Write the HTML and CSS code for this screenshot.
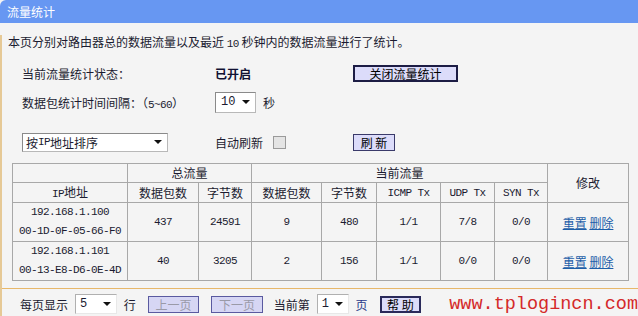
FILE: index.html
```html
<!DOCTYPE html>
<html lang="zh-CN">
<head>
<meta charset="utf-8">
<title>流量统计</title>
<link rel="stylesheet" href="styles.css">
</head>
<body>
<div class="header">流量统计</div>
<div class="content">
  <p class="intro">本页分别对路由器总的数据流量以及最近 <span class="asc">10</span> 秒钟内的数据流量进行了统计。</p>
  <div class="form">
    <div class="row r1">
      <span class="lbl">当前流量统计状态：</span>
      <span class="val strong">已开启</span>
      <span class="btn btn-main">关闭流量统计</span>
    </div>
    <div class="row r2">
      <span class="lbl">数据包统计时间间隔：（<span class="asc">5~60</span>）</span>
      <span class="val"><span class="sel sel-int"><span class="asc">10</span><i class="arrow"></i></span><span class="unit">秒</span></span>
      <span></span>
    </div>
    <div class="row r3">
      <span class="lbl"><span class="sel sel-sort">按<span class="asc">IP</span>地址排序<i class="arrow"></i></span></span>
      <span class="val">自动刷新<span class="chk"></span></span>
      <span class="btn btn-small">刷 新</span>
    </div>
  </div>
  <table class="stats">
    <colgroup>
      <col style="width:115px"><col style="width:71px"><col style="width:53px"><col style="width:70px"><col style="width:55px"><col style="width:64px"><col style="width:54px"><col style="width:53px"><col style="width:81px">
    </colgroup>
    <tr class="h1">
      <td></td>
      <td colspan="2">总流量</td>
      <td colspan="5">当前流量</td>
      <td rowspan="2">修改</td>
    </tr>
    <tr class="h2">
      <td><span class="asc">IP</span>地址</td>
      <td>数据包数</td>
      <td>字节数</td>
      <td>数据包数</td>
      <td>字节数</td>
      <td class="asc">ICMP Tx</td>
      <td class="asc">UDP Tx</td>
      <td class="asc">SYN Tx</td>
    </tr>
    <tr class="data">
      <td class="asc">192.168.1.100<br>00-1D-0F-05-66-F0</td>
      <td class="asc">437</td>
      <td class="asc">24591</td>
      <td class="asc">9</td>
      <td class="asc">480</td>
      <td class="asc">1/1</td>
      <td class="asc">7/8</td>
      <td class="asc">0/0</td>
      <td><a href="#">重置</a> <a href="#">删除</a></td>
    </tr>
    <tr class="data">
      <td class="asc">192.168.1.101<br>00-13-E8-D6-0E-4D</td>
      <td class="asc">40</td>
      <td class="asc">3205</td>
      <td class="asc">2</td>
      <td class="asc">156</td>
      <td class="asc">1/1</td>
      <td class="asc">0/0</td>
      <td class="asc">0/0</td>
      <td><a href="#">重置</a> <a href="#">删除</a></td>
    </tr>
  </table>
  <div class="sep"></div>
  <div class="footer">
    <span>每页显示</span>
    <span class="sel sel-page"><span class="asc">5</span><i class="arrow"></i></span>
    <span class="f-row">行</span>
    <span class="btn btn-dis b-prev">上一页</span>
    <span class="btn btn-dis b-next">下一页</span>
    <span class="f-cur">当前第</span>
    <span class="sel sel-cur"><span class="asc">1</span><i class="arrow"></i></span>
    <span class="f-page">页</span>
    <span class="btn btn-help">帮 助</span>
    <span class="wm">www.tplogincn.com</span>
  </div>
</div>
</body>
</html>
```

FILE: styles.css
```css
html, body {
  margin: 0;
  padding: 0;
  background: #f4f4f4;
}
body {
  width: 638px;
  height: 316px;
  overflow: hidden;
  font-family: "Noto Sans CJK SC", "Liberation Sans", sans-serif;
  font-size: 12px;
  color: #1b1b30;
}
.asc {
  font-family: "Liberation Mono", "DejaVu Sans Mono", monospace;
  font-size: 11px;
  letter-spacing: -0.6px;
}
.header {
  height: 23px;
  line-height: 23px;
  background: #6797f2;
  color: #ffffff;
  padding-left: 7px;
  border-top-left-radius: 6px;
  font-size: 12px;
}
.content {
  border-left: 2px solid #e6c996;
  height: 293px;
  box-sizing: border-box;
}
.intro {
  margin: 12px 0 0 6px;
  height: 14px;
  line-height: 14px;
  white-space: nowrap;
}
.form {
  margin-top: 13px;
  padding-left: 20px;
}
.row {
  display: grid;
  grid-template-columns: 193px 138px auto;
  align-items: center;
}
.r1 { height: 22px; }
.r2 { height: 24px; margin-top: 6px; }
.r3 { height: 24px; margin-top: 16px; }
.strong { font-weight: bold; color: #111133; }
.val { display: flex; align-items: center; }
.unit { margin-left: 7px; }

.btn {
  display: inline-flex;
  align-items: center;
  justify-content: center;
  box-sizing: border-box;
  height: 17px;
  background: #dcdcfa;
  color: #000000;
  border: 1px solid #3a3a6a;
}
.btn-main {
  width: 105px;
  border: 2px solid #1c1c44;
  justify-self: start;
}
.btn-small {
  width: 42px;
  justify-self: start;
}

.sel {
  position: relative;
  display: inline-flex;
  align-items: center;
  box-sizing: border-box;
  background: #ffffff;
  border: 1px solid #b8b8b8;
  border-top-color: #8a8a8a;
  border-left-color: #8a8a8a;
  padding-left: 4px;
}
.arrow {
  position: absolute;
  right: 5px;
  top: 50%;
  margin-top: -2px;
  width: 0;
  height: 0;
  border-left: 4px solid transparent;
  border-right: 4px solid transparent;
  border-top: 4px solid #111111;
}
.sel-int { width: 41px; height: 21px; padding-left: 5px; }
.sel-int .asc { font-size: 12px; letter-spacing: 0; }
.sel-sort { width: 146px; height: 19px; padding-left: 3px; }
.chk {
  display: inline-block;
  width: 11px;
  height: 11px;
  margin-left: 10px;
  background: #e4e4e4;
  border: 1px solid #9a9a9a;
}

.stats {
  margin: 9px 0 0 10px;
  border-collapse: collapse;
  table-layout: fixed;
  width: 616px;
}
.stats td {
  border: 1px solid #a8a8a8;
  text-align: center;
  padding: 0;
  vertical-align: middle;
}
.stats .h1 td { height: 18px; line-height: 16px; }
.stats .h2 td { height: 19px; line-height: 16px; }
.stats .data td { height: 36px; line-height: 19px; }
.stats a {
  color: #1d5ea8;
  text-decoration: underline;
}

.sep {
  margin-top: 7px;
  height: 1px;
  background: #e8b86a;
}
.footer {
  display: flex;
  align-items: center;
  height: 26px;
  margin-top: 2px;
  padding-left: 18px;
  white-space: nowrap;
}
.sel-page {
  width: 42px;
  height: 20px;
  margin-left: 7px;
  border-color: #e8e8e8;
  border-top-color: #b0b0b0;
  border-left-color: #b0b0b0;
}
.sel-page .asc, .sel-cur .asc { font-size: 12px; letter-spacing: 0; }
.f-row { margin-left: 7px; }
.btn-dis {
  width: 52px;
  color: #9a9aa8;
  background: #d6d6f4;
  border: 1px solid #5a5aa0;
}
.b-prev { margin-left: 12px; }
.b-next { margin-left: 12px; }
.f-cur { margin-left: 11px; }
.sel-cur {
  width: 32px;
  height: 20px;
  margin-left: 7px;
  border-color: #e8e8e8;
  border-top-color: #b0b0b0;
  border-left-color: #b0b0b0;
}
.f-page { margin-left: 7px; color: #2a3a8a; }
.btn-help {
  width: 42px;
  margin-left: 12px;
  border: 2px solid #2a2a5a;
}
.wm {
  margin-left: 28px;
  font-family: "Liberation Mono", monospace;
  font-size: 18.5px;
  color: #d42a2a;
}
```
